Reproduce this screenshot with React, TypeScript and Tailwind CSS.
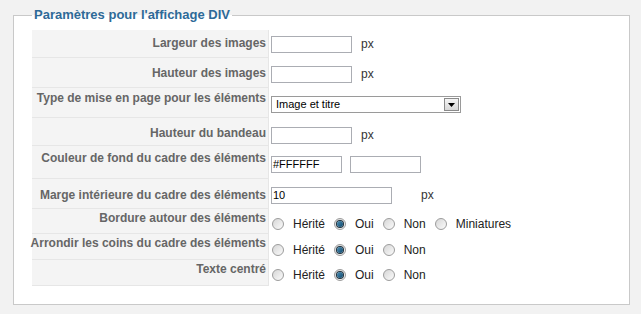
import React from "react";

const font = { fontFamily: '"Liberation Sans", Arial, sans-serif' };

const TextBox = ({ w, value = "" }: { w: string; value?: string }) => (
   <div
      className={`${w} h-[17px] border border-[#abadb3] bg-white text-[11px] leading-[15px] pl-[1px] text-black`}
   >
      {value}
   </div>
);

const Px = ({ ml }: { ml: string }) => (
   <span className={`${ml} text-[12px] text-[#333]`}>px</span>
);

const Radio = ({ checked = false }: { checked?: boolean }) => (
   <span className="w-[12px] h-[12px] rounded-full border border-[#9c9c9c] bg-gradient-to-br from-[#d6d6d6] to-[#fbfbfb] flex items-center justify-center shrink-0">
      {checked && (
         <span className="w-[6px] h-[6px] rounded-full bg-gradient-to-br from-[#4c8fb5] to-[#0f4a6e] ring-1 ring-[#1f2f3a]" />
      )}
   </span>
);

const RadioGroup = ({ options, checked }: { options: string[]; checked: number }) => (
   <div className="flex items-center pl-[1px] text-[12px] text-[#222]">
      {options.map((o, i) => (
         <div key={o} className={`flex items-center ${i > 0 ? "ml-[9px]" : ""}`}>
            <Radio checked={i === checked} />
            <span className="ml-[9px]">{o}</span>
         </div>
      ))}
   </div>
);

type Row = {
   label: string;
   h: string;
   lpt: string;
   vpt: string;
   content: React.ReactNode;
};

const rows: Row[] = [
   {
      label: "Largeur des images",
      h: "h-[28px]",
      lpt: "pt-[6px]",
      vpt: "pt-[5px]",
      content: (
         <div className="flex items-center">
            <TextBox w="w-[81px]" />
            <Px ml="ml-[9px]" />
         </div>
      ),
   },
   {
      label: "Hauteur des images",
      h: "h-[30px]",
      lpt: "pt-[8px]",
      vpt: "pt-[7px]",
      content: (
         <div className="flex items-center">
            <TextBox w="w-[81px]" />
            <Px ml="ml-[9px]" />
         </div>
      ),
   },
   {
      label: "Type de mise en page pour les éléments",
      h: "h-[30px]",
      lpt: "pt-[3px]",
      vpt: "pt-[8px]",
      content: (
         <div className="w-[190px] h-[17px] border border-[#9a9a9a] bg-white flex items-center justify-between text-[11px] text-black">
            <span className="pl-[4px]">Image et titre</span>
            <span className="w-[15px] h-[13px] mr-[1px] border border-[#8a8a8a] bg-gradient-to-b from-[#f4f4f4] to-[#d8d8d8] flex items-center justify-center">
               <svg width="7" height="4" viewBox="0 0 7 4">
                  <path d="M0 0 H7 L3.5 4 Z" fill="#000" />
               </svg>
            </span>
         </div>
      ),
   },
   {
      label: "Hauteur du bandeau",
      h: "h-[28px]",
      lpt: "pt-[8px]",
      vpt: "pt-[8px]",
      content: (
         <div className="flex items-center">
            <TextBox w="w-[81px]" />
            <Px ml="ml-[9px]" />
         </div>
      ),
   },
   {
      label: "Couleur de fond du cadre des éléments",
      h: "h-[33px]",
      lpt: "pt-[5px]",
      vpt: "pt-[10px]",
      content: (
         <div className="flex items-center">
            <TextBox w="w-[71px]" value="#FFFFFF" />
            <div className="ml-[8px]">
               <TextBox w="w-[71px]" />
            </div>
         </div>
      ),
   },
   {
      label: "Marge intérieure du cadre des éléments",
      h: "h-[30px]",
      lpt: "pt-[9px]",
      vpt: "pt-[7px]",
      content: (
         <div className="flex items-center">
            <TextBox w="w-[121px]" value="10" />
            <Px ml="ml-[29px]" />
         </div>
      ),
   },
   {
      label: "Bordure autour des éléments",
      h: "h-[25px]",
      lpt: "pt-[2px]",
      vpt: "pt-[6px]",
      content: <RadioGroup options={["Hérité", "Oui", "Non", "Miniatures"]} checked={1} />,
   },
   {
      label: "Arrondir les coins du cadre des éléments",
      h: "h-[26px]",
      lpt: "pt-[2px]",
      vpt: "pt-[7px]",
      content: <RadioGroup options={["Hérité", "Oui", "Non"]} checked={1} />,
   },
   {
      label: "Texte centré",
      h: "h-[26px]",
      lpt: "pt-[2px]",
      vpt: "pt-[6px]",
      content: <RadioGroup options={["Hérité", "Oui", "Non"]} checked={1} />,
   },
];

const App = () => {
   return (
      <div className="w-[641px] h-[314px] bg-[#f2f2f2] pt-[7px] pl-[13px]" style={font}>
         <fieldset className="w-[617px] h-[298px] border border-[#c9c9c9] bg-white pl-[18px] pr-[18px] pt-[7px]">
            <legend className="px-[2px] text-[13px] leading-[16px] font-bold text-[#2e6a98]">
               Paramètres pour l'affichage DIV
            </legend>
            <div className="flex flex-col">
               {rows.map((r) => (
                  <div key={r.label} className={`flex ${r.h}`}>
                     <div
                        className={`w-[237px] shrink-0 bg-[#f4f4f4] border-b border-r border-[#e6e6e6] flex justify-end whitespace-nowrap pr-[2px] text-[12px] leading-[15px] font-bold text-[#666] ${r.lpt}`}
                     >
                        <span>{r.label}</span>
                     </div>
                     <div className={`pl-[2px] ${r.vpt}`}>{r.content}</div>
                  </div>
               ))}
            </div>
         </fieldset>
      </div>
   );
};

export default App;
